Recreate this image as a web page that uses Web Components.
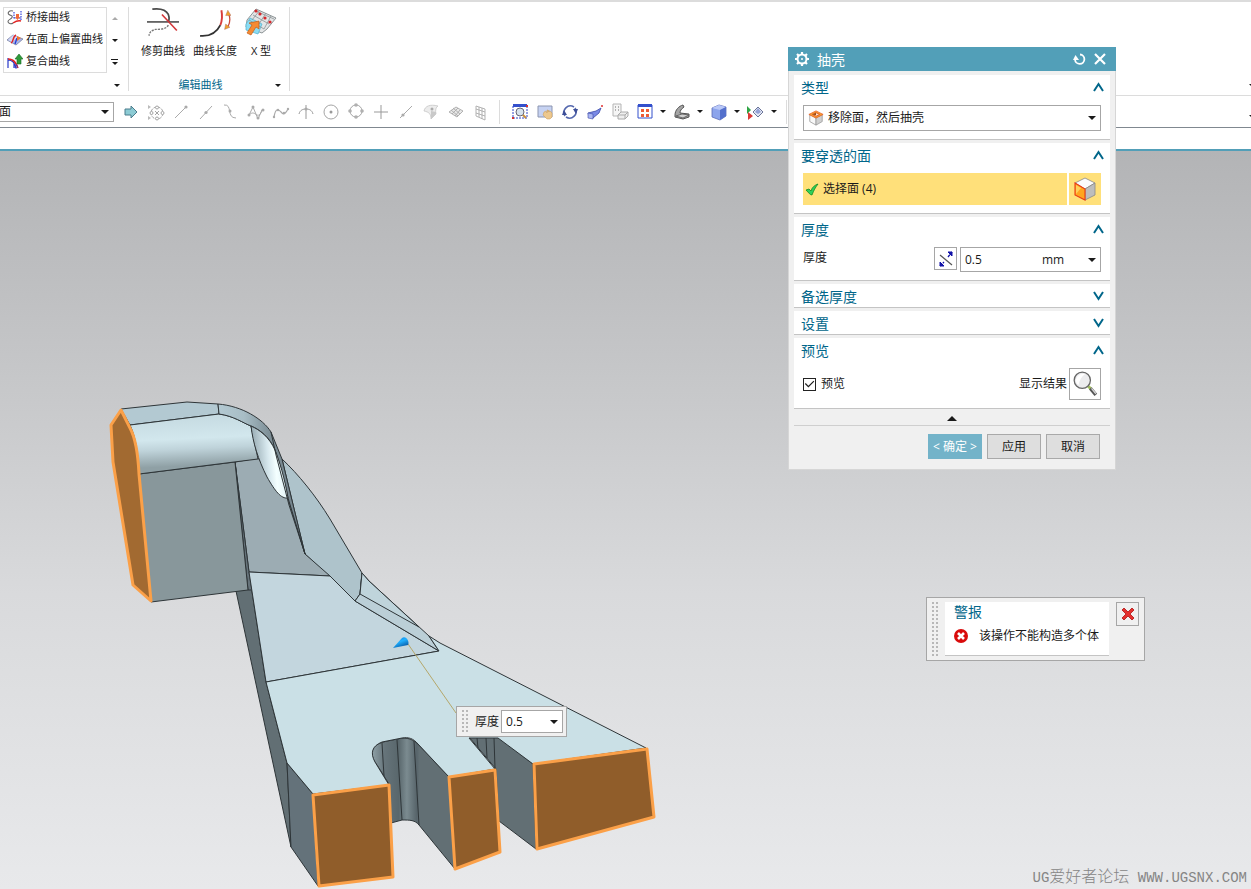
<!DOCTYPE html>
<html lang="zh-CN">
<head>
<meta charset="utf-8">
<meta name="viewport" content="width=device-width, initial-scale=1">
<title>抽壳</title>
<style>
  :root {
    --accent: #529fb8;
    --heading: #00668a;
    --ink: #1a1a1a;
    --panel: #f0f0f0;
    --line: #dcdcdc;
    --edge: #a6a6a6;
    --pick: #ffe07a;
  }

  body {
    margin: 0;
    color: var(--ink);
    font: 12px/16px "Open Sans", "Noto Sans CJK SC", sans-serif;
  }
</style>
</head>
<body>
<nx-app></nx-app>

<script>
const ICONS = {
  bridge: [16, `<g fill="none" stroke-width="1.1"><path d="M6 2C2 1 0 4 2 5.500s4 1 3 3-4 2-4 4 3 3 5 1.500" stroke="#666"/><path d="M6 14c3-2 5-3 8-2" stroke="#e02424" stroke-width="1.500"/><path d="M7 3v7M14 2v9M7 9h7" stroke="#2838d8" stroke-dasharray="1.500 1"/></g><path d="M9 5h3v3h1l-2.500 3L8 8h1z" fill="#f06a3a"/>`],
  offset: [16, `<path d="M0 9l6-5 10 4-7 6z" fill="#a9b6ea" stroke="#7b82a0" stroke-width=".8"/><path d="M6 4l5 2-6 5-4-2z" fill="#d3daf7"/><path d="M4 12c3-1 1-6 5-8" stroke="#e02424" stroke-width="1.500" fill="none"/><path d="M8 13l2-6" stroke="#223bd0" stroke-width="1.300" fill="none"/><path d="M10 5l4 2-4 3z" fill="#f2742e"/>`],
  compound: [16, `<path d="M1 5v10M7 9v6M1 7c5 0 7 3 8 8" stroke="#2838c8" fill="none" stroke-width="1.200"/><path d="M1 6c6 0 8 4 10 9" stroke="#e02424" fill="none" stroke-width="1.500"/><path d="M8 12h2v3h-2z" fill="none" stroke="#2838c8" stroke-width=".8"/><path d="M12 1l4 5h-2v5h-4V6H8z" fill="#2f9a3a" stroke="#1a6b25" stroke-width=".6"/>`],
  trim: [30, `<g fill="none"><path d="M5 2c8-1 13 1 15 5 1 3 1 5 0 7" stroke="#4a4a4a" stroke-width="1.600"/><path d="M20 17c-2 4-8 4-12 4-4 1-6 3-6 6" stroke="#777" stroke-width="1.300" stroke-dasharray="2 1"/><path d="M0 14h30" stroke="#333" stroke-width="1.300"/><path d="M14 7l14 15" stroke="#d33638" stroke-width="1.500"/></g>`],
  length: [30, `<g fill="none"><path d="M1 27c11 1 16-4 19-10" stroke="#333" stroke-width="1.700"/><path d="M20 17c2-5 2-9 1-14" stroke="#d93c3c" stroke-width="1.800"/><path d="M28 7c2 5 1 8-1 12" stroke="#c84a3a" stroke-width="1.200"/></g><path d="M27 3l3 5h-5zM24 21l1-5 4 3z" fill="#f0a12c" stroke="#a66" stroke-width=".4"/>`],
  xform: [32, `<path d="M11 2l20 9-9 11-5 4-16-6 1-7z" fill="#e3e5e6" stroke="#8d9496"/><path d="M1 17l4-6 12 6-4 10-12-4z" fill="#8bdcf3" stroke="#4db1d0" stroke-width=".7"/><path d="M15 3l-8 10M21 6l-7 11M26 9l-7 13M8 8l16 9M4 13l15 9M11 4l18 8" stroke="#8b9395" stroke-width=".8" fill="none"/><g fill="#d5282b"><circle cx="11" cy="4" r="1.600"/><circle cx="15" cy="7" r="1.600"/><circle cx="20" cy="11" r="1.600"/><circle cx="25" cy="15" r="1.600"/></g><path d="M14 14l-10 2 3 2-5 8 4 2 5-8 3 2z" fill="#f58a32" stroke="#c45c16" stroke-width=".7"/>`],
  arrow: [18, `<path d="M3 6h6V3l6 6-6 6v-3H3z" fill="#8ccbd4" stroke="#4b7c8c"/>`],
  snap: [18, `<g fill="none" stroke="#a5a5a5"><circle cx="10" cy="10" r="6" stroke-dasharray="3 1"/><circle cx="10" cy="4.500" r="1.500" fill="#fff"/><circle cx="10" cy="15.500" r="1.500" fill="#fff"/><circle cx="4.500" cy="10" r="1.500" fill="#fff"/><circle cx="15.500" cy="10" r="1.500" fill="#fff"/><path d="M8 8l4 4M12 8l-4 4"/></g><path d="M1 2l3 2-3 2zM1 13l3 2-3 2z" fill="#bbb"/>`],
  end: [18, `<path d="M3 15L14 4" stroke="#aaa"/><circle cx="14" cy="4" r="1.600" fill="#aaa"/>`],
  mid: [18, `<path d="M3 16L15 3" stroke="#aaa"/><circle cx="9" cy="9.500" r="1.600" fill="#aaa"/>`],
  control: [18, `<path d="M2 2c9-1 2 13 12 13" stroke="#aaa" fill="none"/><circle cx="8" cy="8" r="1.500" fill="#aaa"/>`],
  poles: [18, `<path d="M2 12l4-8 5 12 4-9M2 12c4-4 6-1 8 0s4-1 5-5" stroke="#aaa" fill="none"/><g fill="#aaa"><circle cx="6" cy="4" r="1.500"/><circle cx="11" cy="15" r="1.500"/><circle cx="16" cy="7" r="1.500"/><circle cx="2" cy="12" r="1.500"/></g>`],
  spline: [18, `<path d="M2 14C4 2 8 8 10 10s4 0 6-4" stroke="#aaa" stroke-width="1.200" fill="none"/><g fill="#aaa"><circle cx="2" cy="14" r="1.200"/><circle cx="6" cy="7" r="1.200"/><circle cx="12" cy="10" r="1.200"/><circle cx="16" cy="6" r="1.200"/></g>`],
  cross: [18, `<path d="M9 2v14M2 11c1-4 4-5 7-5s6 1 7 5" stroke="#999" fill="none"/><circle cx="9" cy="6" r="1.500" fill="#aaa"/>`],
  center: [18, `<circle cx="9" cy="9" r="7" fill="none" stroke="#a5a5a5"/><circle cx="9" cy="9" r="1.500" fill="#999"/>`],
  quadrant: [18, `<circle cx="9" cy="8" r="6" fill="none" stroke="#a5a5a5"/><g fill="#b0b0b0"><circle cx="9" cy="2" r="1.800"/><circle cx="9" cy="14" r="1.800"/><circle cx="3" cy="8" r="1.800"/><circle cx="15" cy="8" r="1.800"/></g>`],
  plus: [18, `<path d="M9 2v14M2 9h14" stroke="#999"/>`],
  oncurve: [18, `<path d="M3 15L15 3" stroke="#aaa"/><circle cx="6" cy="12" r="1.600" fill="#aaa"/>`],
  onface: [18, `<path d="M2 8c1-5 6-7 14-5-2 1-3 4-2 8l-5 5c0-5-2-7-7-8z" fill="#ececec" stroke="#c6c6c6" stroke-width=".8"/><path d="M9 8l5 1v2l-5 5z" fill="#c9c9c9"/><circle cx="10" cy="6" r="1.500" fill="#aaa"/>`],
  mesh: [18, `<path d="M2 9l7-5 7 4-6 6zM4 7l7 6M6 5l7 6M5 11l6-6M8 13l5-6" fill="#e8e8e8" stroke="#aaa" stroke-width=".9"/>`],
  grid: [18, `<path d="M4 3l9 3v11L4 13zM7 4v10M10 5v11M4 6l9 3M4 10l9 3" fill="none" stroke="#aaa" stroke-width=".9"/>`],
  fitwin: [18, `<path d="M2 2h14v13H2z" fill="#fff" stroke="#2f45c8" stroke-dasharray="2 1"/><path d="M2 1h14v3H2z" fill="#3450cc"/><circle cx="9" cy="9" r="4" fill="#d7e3ee" stroke="#667"/><path d="M12 12l3 3" stroke="#c98f3b" stroke-width="2"/><path d="M1 14h2v2H1zM15 2h2v2h-2z" fill="#d6322e"/>`],
  pan: [18, `<path d="M2 3h14v11H2z" fill="#c6d2f2" stroke="#8c95b0"/><path d="M8 9l2-1 1 2V7h1v2l1-2v2l1-1 2 2v4l-2 2h-3l-4-4z" fill="#edc88e" stroke="#c99a55" stroke-width=".5"/>`],
  rotate: [18, `<g fill="none" stroke="#5568ae" stroke-width="1.600"><path d="M4 13a6.500 6.500 0 0 1 9-9M14 5a6.500 6.500 0 0 1-9 9"/></g><path d="M12 6l5 0-2 5zM6 12l-5 0 2-5z" fill="#3d4f98"/>`],
  roll: [18, `<path d="M2 10l8-2 5-3-2 5-6 5-4-1z" fill="#7a8ae6" stroke="#3c4aa8" stroke-width=".8"/><path d="M2 10l5 1v5l-5-1z" fill="#aab6f2" stroke="#3c4aa8" stroke-width=".6"/><circle cx="16" cy="3" r="1" fill="#e03030"/>`],
  layout: [18, `<path d="M2 1h8v12H2z" fill="#f5f5f5" stroke="#b5b5b5"/><path d="M4 4h1M7 4h1M4 7h1M7 7h1" stroke="#999" stroke-width="1.500"/><path d="M7 12l3-3h7v4l-3 3H7zM7 12h7v4M14 12l3-3" fill="#eee" stroke="#aaa"/>`],
  fit: [18, `<path d="M2 2h14v13H2z" fill="#fff" stroke="#3450cc"/><path d="M2 1h14v3H2z" fill="#3450cc"/><path d="M5 6h3v3zM5 6v3h3zM13 6h-3v3zM13 6v3h-3zM5 14h3v-3zM5 14v-3h3zM13 14h-3v-3zM13 14v-3h-3z" fill="#ee5b36"/>`],
  section: [18, `<path d="M2 12c0-5 4-9 8-10l1 2c-3 2-4 4-4 6l9 1v3l-6 2-8-2z" fill="#a5a5a5" stroke="#555"/><path d="M3 13l6-2 7 1-6 3z" fill="#d0d0d0" stroke="#555" stroke-width=".8"/>`],
  cube: [18, `<path d="M2 5l7-3 7 2v9l-6 4-8-3z" fill="#8ca4ec" stroke="#5c6cb8" stroke-width=".8"/><path d="M2 5l8 2 6-3-7-2z" fill="#b9c8f8"/><path d="M10 7l6-3v9l-6 4z" fill="#5470cc"/>`],
  show: [18, `<path d="M0 3l4 4-4 4z" fill="#2fa545"/><path d="M1 9l5 4-5 4z" fill="#dc3a36"/><path d="M6 9l5-5 5 5-5 5z" fill="#e3e7f4" stroke="#6a7498"/><path d="M8 9l3-4 3 4-3 2z" fill="#93a1d6"/>`],
  gear: [16, `<circle cx="8" cy="8" r="4.500" fill="none" stroke="#fff" stroke-width="2"/><path d="M8 1v2M8 13v2M1 8h2M13 8h2M3 3l1.500 1.500M11.500 11.500L13 13M13 3l-1.500 1.500M3 13l1.500-1.500" stroke="#fff" stroke-width="2.200"/><circle cx="8" cy="8" r="1" fill="#fff"/>`],
  reset: [14, `<path d="M7 2.500a4.700 4.700 0 1 1-5 5" fill="none" stroke="#fff" stroke-width="1.800"/><path d="M0 8l2.500-5L6 8z" fill="#fff"/>`],
  close: [14, `<path d="M2 2l10 10M12 2L2 12" stroke="#fff" stroke-width="2.200"/>`],
  shell: [18, `<path d="M2 5l7 4v8l-7-4z" fill="#f8f8f8" stroke="#999" stroke-width=".9"/><path d="M9 9l7-4v8l-7 4z" fill="#d0d0d0" stroke="#999" stroke-width=".9"/><path d="M1 5l8-4 8 4-8 4z" fill="#f7a22d" stroke="#e8602a" stroke-width=".9"/><path d="M5 5l4-2 4 2-4 2z" fill="#fbe9d4" stroke="#dd4a20" stroke-width=".9"/><path d="M5 5l4-2v3z" fill="#9a4a10"/>`],
  check: [14, `<path d="M1 8l3-1 2 2c1-4 4-6 7-7-3 4-4 6-6 11-2 0-3-2-6-5z" fill="#2fd05a" stroke="#138a22" stroke-width=".8"/>`],
  face: [24, `<path d="M12 1l10 5-10 6L2 6z" fill="#fbfbfd" stroke="#888" stroke-width=".8"/><path d="M12 12l10-6v12l-10 5z" fill="#bdbdbd" stroke="#888" stroke-width=".8"/><path d="M2 6l10 6v11L2 18z" fill="#ffa51f" stroke="#ea3a17" stroke-width="1.100"/><path d="M3 8l5 3-5 6z" fill="#ffd05b"/>`],
  flip: [16, `<path d="M2 4l12 10" stroke="#555" stroke-width="1.200"/><path d="M2 15l4-4M10 6l4-5" stroke="#1212a8" stroke-width="1.300" stroke-dasharray="3 1"/><path d="M14 1v4l-4-4zM2 15v-4l4 4z" fill="#1212a8" stroke="#1212a8"/>`],
  lens: [24, `<path d="M15 14l3 3" stroke="#9fbe5a" stroke-width="2.600"/><path d="M17 16l5 6" stroke="#555" stroke-width="3.200"/><path d="M18 16l4 5" stroke="#d8d8d8" stroke-width="1.200"/><circle cx="9.500" cy="8.500" r="7.500" fill="#ececee" stroke="#666" stroke-width="1.200"/><path d="M4 7c1-3 4-5 8-4-3 2-5 5-6 10-2-1-3-4-2-6z" fill="#fff"/>`],
  error: [14, `<circle cx="7" cy="7" r="7" fill="#d90b0b"/><path d="M4 4l6 6M10 4l-6 6" stroke="#fff" stroke-width="2.600"/>`],
  cancel: [14, `<path d="M3 1l4 4 4-4 2 2-4 4 4 4-2 2-4-4-4 4-2-2 4-4-4-4z" fill="#e5302d" stroke="#b01312" stroke-width=".8"/>`],
  up: [11, `<path d="M1 9l4.500-7L10 9" fill="none" stroke="#00668a" stroke-width="2"/>`],
  down: [11, `<path d="M1 1l4.500 7L10 1" fill="none" stroke="#00668a" stroke-width="2"/>`]
};

class NxIcon extends HTMLElement {
  connectedCallback() {
    const [box, shapes] = ICONS[this.getAttribute("name")];
    const size = this.getAttribute("size") || box;
    this.attachShadow({ mode: "open" }).innerHTML = /* html */`
    <style>
      :host { display: inline-flex; flex: none; }
      svg { display: block; }
    </style>
    <svg width="${size}" height="${size}" viewBox="0 0 ${box} ${box}" aria-hidden="true">${shapes}</svg>
    `;
  }
}

class NxCaret extends HTMLElement {
  connectedCallback() {
    this.attachShadow({ mode: "open" }).innerHTML = /* html */`
    <style>
      :host { display: inline-flex; flex: none; justify-content: center; align-items: center; width: 12px; pointer-events: none; }
      i { border: 3px solid transparent; border-top-color: var(--ink); border-bottom: 0; }
      :host([dim]) i { border-top: 0; border-bottom: 3px solid #aaa; }
      :host([up]) i { border-width: 5px; border-top: 0; border-bottom: 5px solid var(--ink); }
      :host([wide]) i { border-width: 4px; border-bottom: 0; }
      :host([bar]) { flex-direction: column; gap: 2px; }
      :host([bar])::before { content: ""; width: 7px; height: 1px; background: var(--ink); }
    </style>
    <i></i>
    `;
  }
}

// Icon-only button, the label goes to assistive tech
class NxTool extends HTMLElement {
  connectedCallback() {
    const size = this.getAttribute("size") || 18;
    this.attachShadow({ mode: "open" }).innerHTML = /* html */`
    <style>
      :host { display: flex; flex: none; width: 25px; height: 24px; }
      button { display: flex; flex: 1; justify-content: center; align-items: center; padding: 0; border: 0; background: none; }
      :host([framed]) { width: 23px; height: 23px; }
      :host([framed]) button { border: 1px solid var(--edge); background: #fff; }
      :host([large]) { width: 32px; height: 32px; }
      :host([picked]) button { border: 0; background: var(--pick); }
      :host([plain]) { width: 20px; }
      :host([grey]) button { background: var(--panel); }
    </style>
    <button type="button" aria-label="${this.getAttribute("label")}">
      <nx-icon name="${this.getAttribute("icon")}" size="${size}"></nx-icon>
    </button>
    `;
  }
}

class NxSelect extends HTMLElement {
  connectedCallback() {
    this.attachShadow({ mode: "open" }).innerHTML = /* html */`
    <style>
      :host { display: flex; align-items: center; box-sizing: border-box; border: 1px solid var(--edge); background: #fff; }
      .field { display: grid; flex: 1; align-items: center; height: 100%; }
      select { grid-area: 1 / 1; height: 100%; padding: 0 18px 0 4px; border: 0; outline: 0; appearance: none; background: none; color: inherit; font: inherit; }
      nx-caret { grid-area: 1 / 1; justify-self: end; margin-right: 2px; }
      :host([bare]) { border: 0; }
    </style>
    <slot></slot>
    <div class="field">
      <select aria-label="${this.getAttribute("label")}"><option>${this.getAttribute("value")}</option></select>
      <nx-caret wide></nx-caret>
    </div>
    `;
  }
}

// Ribbon ------------------------------------------------------------

class NxGroup extends HTMLElement {
  connectedCallback() {
    this.attachShadow({ mode: "open" }).innerHTML = /* html */`
    <style>
      :host { display: flex; flex: none; flex-direction: column; justify-content: space-between; margin: 5px 0 4px; border-right: 1px solid var(--line); }
      .items { display: flex; padding: 0 8px; }
      :host([flush]) .items { padding: 0 6px 0 3px; }
      footer { display: flex; align-items: center; height: 12px; padding: 0 5px 0 0; color: var(--heading); font-size: 11px; }
      footer span { flex: 1; text-align: center; }
    </style>
    <div class="items"><slot></slot></div>
    <footer><span>${this.getAttribute("label") || ""}</span><nx-caret></nx-caret></footer>
    `;
  }
}

class NxRibbonButton extends HTMLElement {
  connectedCallback() {
    this.attachShadow({ mode: "open" }).innerHTML = /* html */`
    <style>
      :host { display: block; min-width: 38px; }
      button { display: flex; flex-direction: column; align-items: center; gap: 4px; width: 100%; padding: 0 4px; border: 0; background: none; color: inherit; font: inherit; font-size: 11px; line-height: 16px; white-space: nowrap; }
    </style>
    <button type="button"><nx-icon name="${this.getAttribute("icon")}" size="32"></nx-icon><slot></slot></button>
    `;
  }
}

class NxGallery extends HTMLElement {
  connectedCallback() {
    this.attachShadow({ mode: "open" }).innerHTML = /* html */`
    <style>
      :host { display: flex; font-size: 11px; }
      .list { box-sizing: border-box; width: 104px; height: 66px; border: 1px solid var(--line); overflow: hidden; }
      button { display: flex; align-items: center; gap: 3px; width: 100%; height: 22px; padding: 0 3px 4px; border: 0; background: none; color: inherit; font: inherit; white-space: nowrap; }
      .scroll { width: 15px; }
      .scroll button { justify-content: center; padding: 0; }
    </style>
    <div class="list">
      <button type="button"><nx-icon name="bridge"></nx-icon>桥接曲线</button>
      <button type="button"><nx-icon name="offset"></nx-icon>在面上偏置曲线</button>
      <button type="button"><nx-icon name="compound"></nx-icon>复合曲线</button>
    </div>
    <div class="scroll">
      <button type="button" aria-label="上"><nx-caret dim></nx-caret></button>
      <button type="button" aria-label="下"><nx-caret></nx-caret></button>
      <button type="button" aria-label="更多"><nx-caret bar></nx-caret></button>
    </div>
    `;
  }
}

class NxRibbon extends HTMLElement {
  connectedCallback() {
    this.attachShadow({ mode: "open" }).innerHTML = /* html */`
    <style>
      :host { display: flex; height: 93px; overflow: hidden; border-top: 2px solid var(--line); border-bottom: 1px solid var(--line); background: #fff; }
      .more { align-self: flex-end; margin: 0 -7px 8px auto; }
    </style>
    <nx-group flush><nx-gallery></nx-gallery></nx-group>
    <nx-group label="编辑曲线">
      <nx-ribbon-button icon="trim">修剪曲线</nx-ribbon-button>
      <nx-ribbon-button icon="length">曲线长度</nx-ribbon-button>
      <nx-ribbon-button icon="xform">X 型</nx-ribbon-button>
    </nx-group>
    <nx-caret class="more"></nx-caret>
    `;
  }
}

class NxSelectionBar extends HTMLElement {
  static get snaps() {
    return ["arrow", "snap", "end", "mid", "control", "poles", "spline", "cross", "center", "quadrant", "plus", "oncurve", "onface", "mesh", "grid"];
  }

  static get views() {
    return ["fitwin", "pan", "rotate", "roll", "layout", "fit", "section", "cube", "show"];
  }

  connectedCallback() {
    const tool = (name) => `<nx-tool icon="${name}" label="${name}"></nx-tool>`;
    const menus = ["fit", "section", "cube", "show"];
    this.attachShadow({ mode: "open" }).innerHTML = /* html */`
    <style>
      :host { display: flex; align-items: center; height: 31px; overflow: hidden; border-bottom: 1px solid #808890; background: #fff; }
      nx-select { flex: none; width: 120px; height: 20px; margin: 0 4px 0 -6px; }
      hr { flex: none; width: 1px; height: 24px; margin: 0 7px 0 6px; border: 0; background: var(--line); }
      .more { margin: 10px -7px 0 auto; }
    </style>
    <nx-select label="选择范围" value="面"></nx-select>
    ${NxSelectionBar.snaps.map(tool).join("")}
    <hr>
    ${NxSelectionBar.views.map((name) => tool(name) + (menus.includes(name) ? "<nx-caret></nx-caret>" : "")).join("")}
    <hr>
    <nx-caret class="more"></nx-caret>
    `;
  }
}

// Graphics window ---------------------------------------------------

class NxModel extends HTMLElement {
  connectedCallback() {
    this.attachShadow({ mode: "open" }).innerHTML = /* html */`
    <style>
      :host { display: block; }
      svg { display: block; }
      .body { stroke: #2e3538; stroke-width: 1; stroke-linejoin: round; }
      .edges { fill: none; }
      .cut { fill: #905d2a; stroke: #fba048; stroke-width: 3; stroke-linejoin: round; }
    </style>
    <svg width="700" height="738" viewBox="0 151 700 738" role="img" aria-label="模型">
      <defs>
        <linearGradient id="roll" x1="0" y1="0" x2="0.1" y2="1">
          <stop offset="0" stop-color="#c3d8df"/><stop offset=".45" stop-color="#d2e7ed"/>
          <stop offset=".62" stop-color="#bfd3da"/><stop offset=".9" stop-color="#8fa0a5"/>
        </linearGradient>
        <linearGradient id="band"><stop offset="0" stop-color="#b3c9d2"/><stop offset=".3" stop-color="#a8bdc5"/><stop offset=".6" stop-color="#7d8e96"/><stop offset="1" stop-color="#71818a"/></linearGradient>
        <linearGradient id="gloss" x1="0" y1=".5" x2="1" y2=".35">
          <stop offset="0" stop-color="#8da1a9"/><stop offset=".45" stop-color="#d6e7ed"/><stop offset=".65" stop-color="#f4ffff"/><stop offset="1" stop-color="#d9eef3"/>
        </linearGradient>
        <linearGradient id="slot">
          <stop offset="0" stop-color="#8fa1a7"/><stop offset=".15" stop-color="#66747a"/><stop offset=".32" stop-color="#59676c"/>
          <stop offset=".42" stop-color="#7b8b90"/><stop offset=".54" stop-color="#57646a"/><stop offset=".57" stop-color="#626f74"/><stop offset="1" stop-color="#626f74"/>
        </linearGradient>
        <linearGradient id="cone" x1="0" y1="0" x2=".6" y2="1"><stop offset="0" stop-color="#0a78d8"/><stop offset=".5" stop-color="#1fb0ff"/><stop offset="1" stop-color="#0758a4"/></linearGradient>
      </defs>
      <g class="body">
        <path d="M236 591L249 572 266 682 287 763 291 847z" fill="#626f74"/>
        <path d="M287 763L313 794 318 886 291 847z" fill="#64727a"/>
        <path d="M282 459C298 474 316 496 330 519L362 573 360 594 355 601 305 554z" fill="#aec3cb"/>
        <path d="M235 462L258 458 288 498 305 554 330 576 249 572z" fill="#9cacb3"/>
        <path d="M235 462L249 572 252 590 248 590z" fill="#66737a"/>
        <path d="M139 474L235 462 248 590 151 602z" fill="#88979b"/>
        <path d="M249 572L330 576 355 601 439 651 266 682z" fill="#c3d6de"/>
        <path d="M362 573L369 581 429 636 439 651 355 601 360 594z" fill="#bbcfd7"/>
        <path d="M362 573L369 581 419 627 360 594z" fill="#bfd4db"/>
        <path d="M372 752C374 742 384 742 402 738 410 738 413 740 418 744L449 777 455 869 419 825C415 820 410 820 402 820L391 823 389 784 377 765C373 760 372 756 372 752z" fill="url(#slot)"/>
        <path d="M469 737H498L533 764 536 849 499 821 496 769z" fill="#626f74"/>
        <path d="M266 682L439 651 429 636 440 643 646 748 533 764 498 738 469 738 495 769 449 777 418 744C413 738 408 737 402 738L382 742C372 746 370 753 375 762L389 785 313 794 287 763z" fill="#cae0e6"/>
        <path d="M121 409L187 402 218 404 219 414 130 425z" fill="#b3c9d2"/>
        <path d="M130 425L219 414C234 416 243 423 251 426L252 431 258 459 139 474C138 453 136 438 130 425z" fill="url(#roll)"/>
        <path d="M218 404C242 406 263 419 271 432L282 459 305 554 288 498C284 478 279 461 275 450 270 438 261 430 251 426 243 423 234 416 219 414z" fill="url(#band)"/>
        <path d="M251 426C253 443 258 459 267 477 275 491 281 499 288 498 285 479 279 460 275 450 269 437 260 430 251 426z" fill="url(#gloss)"/>
      </g>
      <g class="body edges">
        <path d="M271 432L276 455 289 505 305 554M382 743L384 776M397 740L402 820M414 741L419 825M477 738L478 748M486 738L487 758M494 738L495 768"/>
      </g>
      <g class="cut">
        <path d="M121 410L111 425 113 462 133 585 151 601 139 474C138 453 136 439 130 428z" fill="#a26a31"/>
        <path d="M313 795L389 785 393 877 319 886z"/>
        <path d="M449 777L495 770 500 852 455 869z"/>
        <path d="M534 764L647 749 654 817 537 849z"/>
      </g>
      <path d="M408 644L456 713" stroke="#b5a76a"/>
      <path d="M393 648L402 638C406 635 410 642 408 645z" fill="url(#cone)"/>
    </svg>
    `;
  }
}

class NxGrip extends HTMLElement {
  connectedCallback() {
    this.attachShadow({ mode: "open" }).innerHTML = /* html */`
    <style>
      :host { display: block; flex: none; width: 8px; background: conic-gradient(from 90deg at 2px 2px, transparent 270deg, #b8b8b8 0) 0 0 / 4px 4px; }
    </style>
    `;
  }
}

class NxMiniInput extends HTMLElement {
  connectedCallback() {
    this.attachShadow({ mode: "open" }).innerHTML = /* html */`
    <style>
      :host { display: flex; align-items: center; gap: 2px; box-sizing: border-box; height: 31px; padding: 3px; border: 1px solid var(--edge); background: var(--panel); }
      nx-grip { align-self: stretch; margin-right: 5px; }
      .box { display: flex; align-items: center; border: 1px solid var(--edge); background: #fff; }
      input { width: 44px; height: 21px; padding: 0 4px; border: 0; outline: 0; box-sizing: border-box; background: none; color: inherit; font: inherit; }
      button { display: flex; padding: 8px 2px; border: 0; background: none; }
    </style>
    <nx-grip></nx-grip>
    <label for="value">厚度</label>
    <div class="box"><input id="value" value="0.5"><button type="button" aria-label="选项"><nx-caret wide></nx-caret></button></div>
    `;
  }
}

// Dialog ------------------------------------------------------------

class NxSection extends HTMLElement {
  connectedCallback() {
    const open = this.hasAttribute("open");
    this.attachShadow({ mode: "open" }).innerHTML = /* html */`
    <style>
      :host { display: block; border-bottom: 1px solid #c4c4c4; background: #fff; }
      button { display: flex; justify-content: space-between; align-items: center; width: 100%; height: 23px; padding: 2px 6px 0 7px; border: 0; background: none; color: var(--heading); font: inherit; font-size: 14px; line-height: 20px; }
      .content { display: flex; align-items: center; gap: 2px; padding: 7px 9px 8px; }
    </style>
    <button type="button" aria-expanded="${open}">${this.getAttribute("label")}<nx-icon name="${open ? "up" : "down"}"></nx-icon></button>
    ${open ? `<div class="content"><slot></slot></div>` : ""}
    `;
  }
}

class NxMeasure extends HTMLElement {
  connectedCallback() {
    this.attachShadow({ mode: "open" }).innerHTML = /* html */`
    <style>
      :host { display: flex; flex: 1; align-items: flex-start; gap: 3px; height: 25px; }
      label { flex: 1; line-height: 22px; }
      .box { display: flex; box-sizing: border-box; width: 141px; height: 25px; border: 1px solid var(--edge); background: #fff; }
      input { flex: 1; min-width: 0; padding: 0 4px; border: 0; outline: 0; background: none; color: inherit; font: inherit; }
      nx-select { width: 62px; }
    </style>
    <label for="thickness">厚度</label>
    <nx-tool icon="flip" label="反向" size="16" framed></nx-tool>
    <div class="box"><input id="thickness" value="0.5"><nx-select bare label="单位" value="mm"></nx-select></div>
    `;
  }
}

class NxCheck extends HTMLElement {
  connectedCallback() {
    this.attachShadow({ mode: "open" }).innerHTML = /* html */`
    <style>
      :host { display: block; flex: 1; }
      label { display: flex; align-items: center; gap: 5px; }
      input { display: grid; width: 13px; height: 13px; margin: 0; border: 1px solid #222; appearance: none; background: #fff; }
      input:checked::before { content: ""; background: #222; clip-path: polygon(8% 50%, 16% 42%, 40% 66%, 86% 20%, 94% 28%, 40% 82%); }
    </style>
    <label><input type="checkbox" checked><slot></slot></label>
    `;
  }
}

class NxDialog extends HTMLElement {
  connectedCallback() {
    this.attachShadow({ mode: "open" }).innerHTML = /* html */`
    <style>
      :host { display: block; box-sizing: border-box; width: 328px; background: var(--panel); }
      header { display: flex; align-items: center; height: 24px; padding: 0 6px; background: var(--accent); color: #fff; font-size: 14px; line-height: 20px; }
      header nx-icon { margin-right: 7px; }
      h1 { flex: 1; margin: 0; padding-top: 2px; font: inherit; }
      .content { border: 1px solid #d6d6d6; border-top: 0; padding: 4px 5px 10px; }
      .sections { display: grid; gap: 3px; }
      .fold { display: flex; justify-content: center; align-items: center; width: 100%; height: 17px; padding: 2px 0 0; border: 0; border-bottom: 1px solid #cfcfcf; background: none; }
      footer { display: flex; justify-content: flex-end; gap: 5px; padding: 8px 10px 0; }
      footer button { width: 54px; height: 25px; padding: 0; border: 1px solid #a9a9a9; background: #dedede; color: inherit; font: inherit; white-space: nowrap; }
      footer .primary { border-color: #73b3c9; background: #73b3c9; color: #fff; }
      nx-select { flex: 1; height: 26px; padding-left: 4px; }
      .pick { display: flex; flex: 1; align-items: center; gap: 4px; height: 32px; padding-left: 2px; background: var(--pick); }
    </style>
    <header>
      <nx-icon name="gear"></nx-icon><h1>抽壳</h1>
      <nx-tool icon="reset" label="重置" size="14" plain></nx-tool>
      <nx-tool icon="close" label="关闭" size="14" plain></nx-tool>
    </header>
    <div class="content">
      <div class="sections">
        <nx-section label="类型" open>
          <nx-select label="类型" value="移除面，然后抽壳"><nx-icon name="shell" size="16"></nx-icon></nx-select>
        </nx-section>
        <nx-section label="要穿透的面" open>
          <div class="pick"><nx-icon name="check"></nx-icon>选择面 (4)</div>
          <nx-tool icon="face" label="面" size="24" framed large picked></nx-tool>
        </nx-section>
        <nx-section label="厚度" open><nx-measure></nx-measure></nx-section>
        <nx-section label="备选厚度"></nx-section>
        <nx-section label="设置"></nx-section>
        <nx-section label="预览" open>
          <nx-check>预览</nx-check>
          <span>显示结果</span>
          <nx-tool icon="lens" label="显示结果" size="26" framed large></nx-tool>
        </nx-section>
      </div>
      <button type="button" class="fold" aria-label="折叠"><nx-caret up></nx-caret></button>
      <footer>
        <button type="button" class="primary">&lt; 确定 &gt;</button>
        <button type="button">应用</button>
        <button type="button">取消</button>
      </footer>
    </div>
    `;
  }
}

class NxAlert extends HTMLElement {
  connectedCallback() {
    this.attachShadow({ mode: "open" }).innerHTML = /* html */`
    <style>
      :host { display: flex; align-items: flex-start; box-sizing: border-box; width: 219px; height: 64px; padding: 4px 5px 4px 3px; border: 1px solid var(--edge); background: var(--panel); }
      nx-grip { align-self: stretch; margin-right: 7px; }
      .message { flex: 1; height: 54px; margin-right: 7px; padding: 0 9px; box-sizing: border-box; border-bottom: 1px solid #c4c4c4; background: #fff; white-space: nowrap; }
      h2 { margin: 0; color: var(--heading); font: inherit; font-size: 14px; line-height: 20px; }
      p { display: flex; align-items: center; gap: 11px; margin: 0; line-height: 28px; }
      nx-tool { height: 24px; }
    </style>
    <nx-grip></nx-grip>
    <div class="message"><h2>警报</h2><p><nx-icon name="error"></nx-icon><slot></slot></p></div>
    <nx-tool icon="cancel" label="关闭" size="14" framed grey></nx-tool>
    `;
  }
}

class NxViewport extends HTMLElement {
  connectedCallback() {
    this.attachShadow({ mode: "open" }).innerHTML = /* html */`
    <style>
      :host { display: flex; flex: 1; justify-content: flex-end; align-items: flex-end; position: relative; min-height: 600px; overflow: hidden; background: linear-gradient(#b3b4b6, #c8c9cb 34%, #d9dadc 60%, #e8e9eb); }
      nx-model { position: absolute; left: 0; top: 0; }
      nx-mini-input { position: absolute; left: 456px; top: 555px; }
      .watermark { padding: 0 4px 2px; color: #858585; font: 300 16px/24px "Noto Sans CJK SC", sans-serif; white-space: pre; }
      .watermark span { font: 14px "Liberation Mono", monospace; }
    </style>
    <nx-model></nx-model>
    <nx-mini-input></nx-mini-input>
    <div class="watermark"><span>UG</span>爱好者论坛<span> WWW.UGSNX.COM</span></div>
    `;
  }
}

class NxApp extends HTMLElement {
  connectedCallback() {
    this.attachShadow({ mode: "open" }).innerHTML = /* html */`
    <style>
      :host { display: flex; flex-direction: column; position: relative; min-height: 100vh; overflow: hidden; }
      .tabs { height: 21px; border-bottom: 2px solid var(--accent); background: #fff; }
      nx-dialog { position: absolute; right: 135px; top: 47px; }
      nx-alert { position: absolute; right: 106px; top: 597px; }
    </style>
    <nx-ribbon></nx-ribbon>
    <nx-selection-bar></nx-selection-bar>
    <div class="tabs"></div>
    <nx-viewport></nx-viewport>
    <nx-dialog></nx-dialog>
    <nx-alert>该操作不能构造多个体</nx-alert>
    `;
  }
}

customElements.define("nx-icon", NxIcon);
customElements.define("nx-caret", NxCaret);
customElements.define("nx-tool", NxTool);
customElements.define("nx-select", NxSelect);
customElements.define("nx-group", NxGroup);
customElements.define("nx-ribbon-button", NxRibbonButton);
customElements.define("nx-gallery", NxGallery);
customElements.define("nx-ribbon", NxRibbon);
customElements.define("nx-selection-bar", NxSelectionBar);
customElements.define("nx-model", NxModel);
customElements.define("nx-grip", NxGrip);
customElements.define("nx-mini-input", NxMiniInput);
customElements.define("nx-section", NxSection);
customElements.define("nx-measure", NxMeasure);
customElements.define("nx-check", NxCheck);
customElements.define("nx-dialog", NxDialog);
customElements.define("nx-alert", NxAlert);
customElements.define("nx-viewport", NxViewport);
customElements.define("nx-app", NxApp);
</script>
</body>
</html>
